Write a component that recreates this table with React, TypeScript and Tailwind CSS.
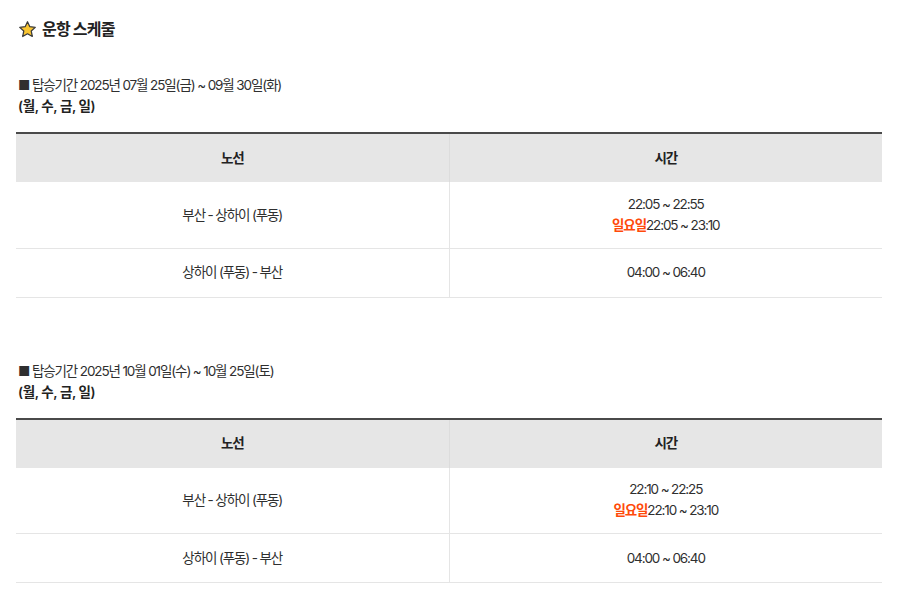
import React from 'react'

type Row = { route: string; times: string[]; sunday?: string }

const sections: { period: string; days: string; rows: Row[] }[] = [
  {
    period: '탑승기간 2025년 07월 25일(금) ~ 09월 30일(화)',
    days: '(월, 수, 금, 일)',
    rows: [
      { route: '부산 - 상하이 (푸동)', times: ['22:05 ~ 22:55'], sunday: '22:05 ~ 23:10' },
      { route: '상하이 (푸동) - 부산', times: ['04:00 ~ 06:40'] },
    ],
  },
  {
    period: '탑승기간 2025년 10월 01일(수) ~ 10월 25일(토)',
    days: '(월, 수, 금, 일)',
    rows: [
      { route: '부산 - 상하이 (푸동)', times: ['22:10 ~ 22:25'], sunday: '22:10 ~ 23:10' },
      { route: '상하이 (푸동) - 부산', times: ['04:00 ~ 06:40'] },
    ],
  },
]

function Star(): React.ReactElement {
  return (
    <svg width="19" height="19" viewBox="0 0 24 24">
      <path
        d="M12 2.2l2.95 6.3 6.85.8-5.08 4.7 1.36 6.8L12 17.4l-6.08 3.4 1.36-6.8L2.2 9.3l6.85-.8z"
        fill="#f9c531"
        stroke="#3a3a3a"
        strokeWidth="1.6"
        strokeLinejoin="round"
      />
    </svg>
  )
}

export default function App(): React.ReactElement {
  return (
    <div
      className="w-[900px] h-[600px] bg-white px-4 pt-[18px] text-[#2f2f2f] tracking-[-0.07em]"
      style={{ fontFamily: 'Inter, "Noto Sans CJK KR", sans-serif' }}
    >
      <div className="flex items-center gap-[5px] pl-[2px] h-[22px]">
        <Star />
        <h2 className="text-[16px] font-bold text-[#222] tracking-[-0.05em]">운항 스케줄</h2>
      </div>

      {sections.map((s, i) => (
        <div key={i} className={i === 0 ? 'mt-[35px]' : 'mt-[63px]'}>
          <p className="text-[13.5px] leading-[21px] pl-[2px]">■ {s.period}</p>
          <p className="text-[13.5px] leading-[21px] font-semibold pl-[2px] text-[#222] tracking-[-0.03em]">{s.days}</p>
          <table className="w-[866px] mt-[15px] border-collapse border-t-2 border-[#4a4a4a] text-[13.5px]">
            <thead>
              <tr className="bg-[#e6e6e6] h-[49px]">
                <th className="w-[433px] font-bold text-[#222] border-r border-[#dcdcdc]">노선</th>
                <th className="font-bold text-[#222]">시간</th>
              </tr>
            </thead>
            <tbody>
              {s.rows.map((r, j) => (
                <tr key={j} className={`border-b border-[#e5e5e5] ${r.sunday ? 'h-[66px]' : 'h-[49px]'}`}>
                  <td className="text-center border-r border-[#e5e5e5]">{r.route}</td>
                  <td className="text-center leading-[21px]">
                    {r.times.map((t) => <div key={t}>{t}</div>)}
                    {r.sunday && (
                      <div>
                        <span className="text-[#ff4a0a] font-bold">일요일</span>{r.sunday}
                      </div>
                    )}
                  </td>
                </tr>
              ))}
            </tbody>
          </table>
        </div>
      ))}
    </div>
  )
}
